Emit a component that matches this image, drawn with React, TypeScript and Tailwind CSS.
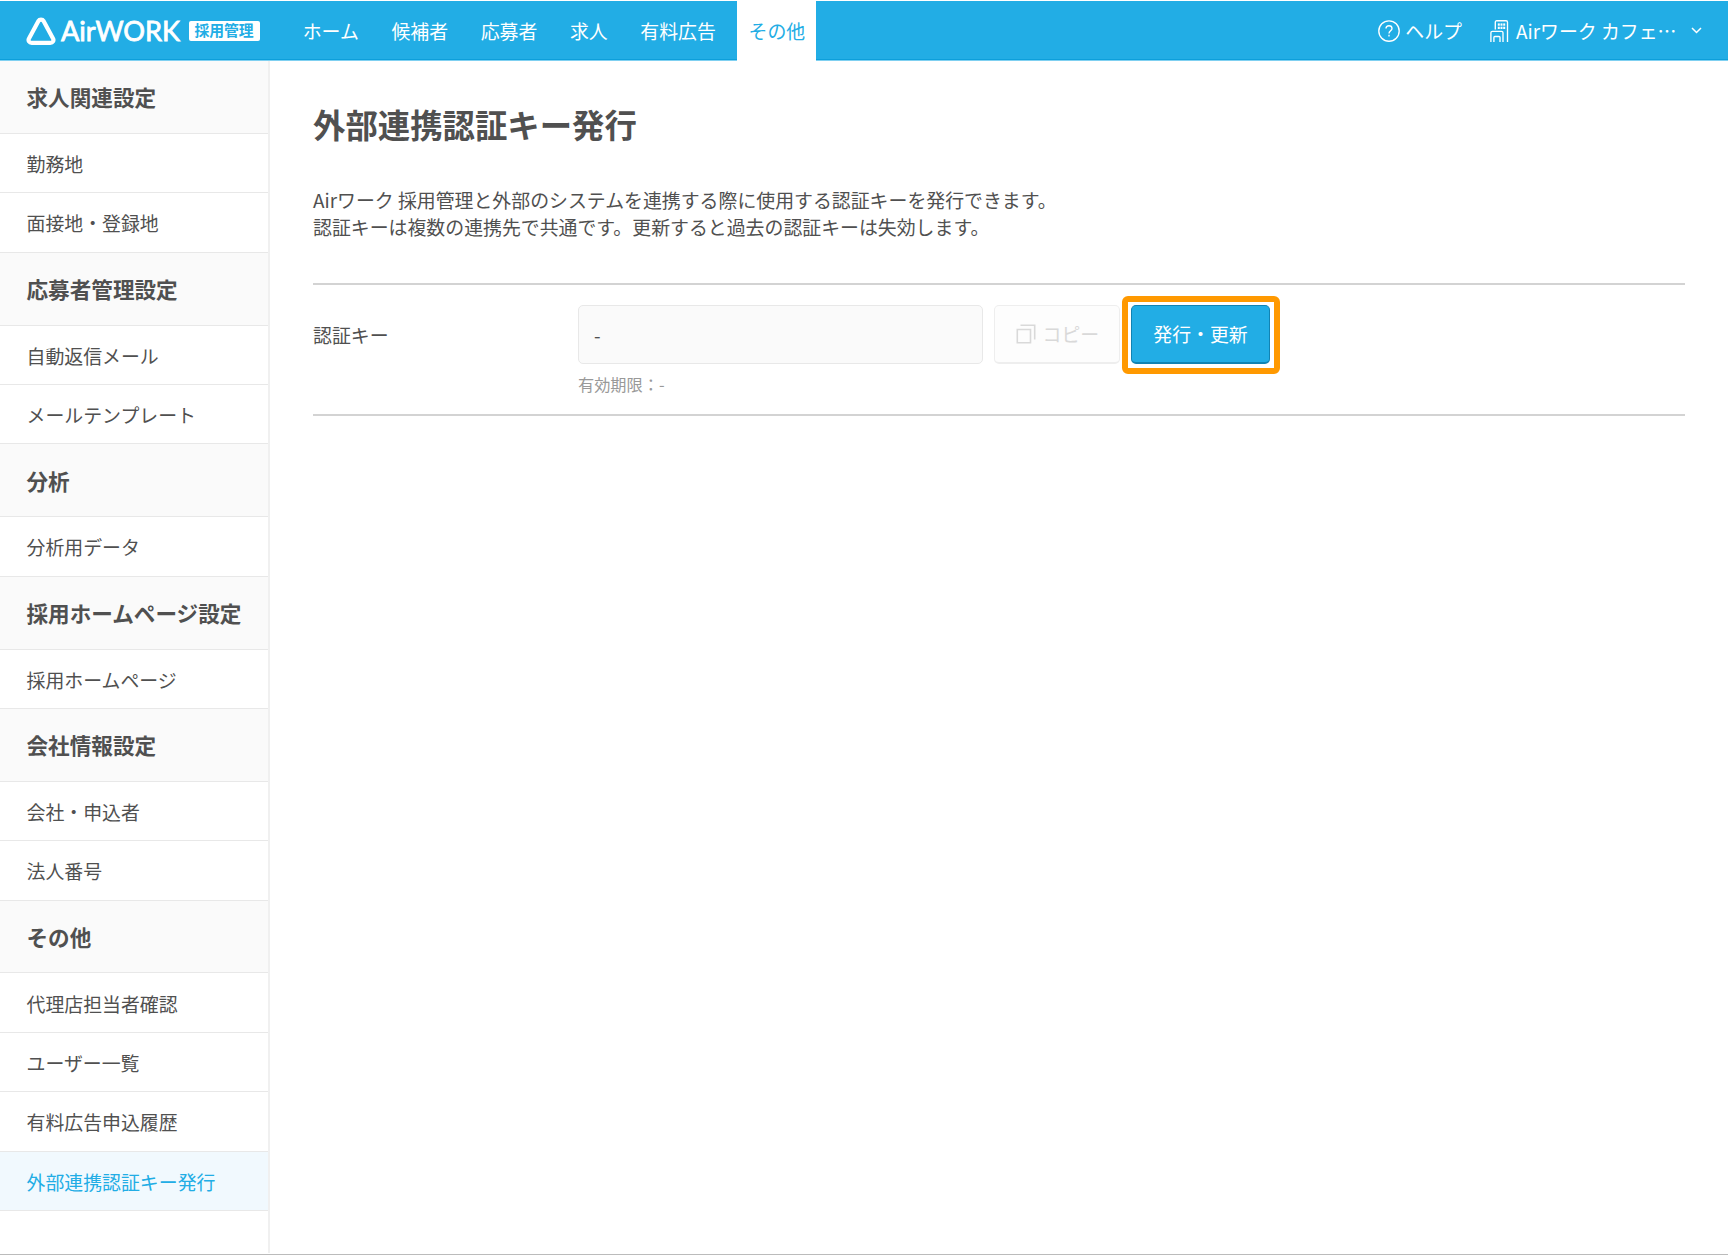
import type { ReactNode } from 'react';

const navItems = ['ホーム', '候補者', '応募者', '求人', '有料広告', 'その他'];

const sections = [
  { title: '求人関連設定', items: ['勤務地', '面接地・登録地'] },
  { title: '応募者管理設定', items: ['自動返信メール', 'メールテンプレート'] },
  { title: '分析', items: ['分析用データ'] },
  { title: '採用ホームページ設定', items: ['採用ホームページ'] },
  { title: '会社情報設定', items: ['会社・申込者', '法人番号'] },
  {
    title: 'その他',
    items: ['代理店担当者確認', 'ユーザー一覧', '有料広告申込履歴', '外部連携認証キー発行'],
  },
];

function Logo() {
  return (
    <div className="flex w-[265px] items-center pl-[26px]">
      <svg width="156" height="44" viewBox="0 -8 156 44" fill="none">
        <path
          d="M12.3 4.2a3.2 3.2 0 0 1 5.4 0l9.3 17.2c1.2 2.2-.2 4.5-2.7 4.5H5.7c-2.5 0-3.9-2.3-2.7-4.5z"
          stroke="white"
          strokeWidth="4.2"
          strokeLinejoin="round"
        />
        <text
          x="35"
          y="24.2"
          fill="white"
          stroke="white"
          strokeWidth="0.8"
          fontSize="27"
          fontFamily="Lato, sans-serif"
          textLength="119"
          lengthAdjust="spacingAndGlyphs"
        >
          AirWORK
        </text>
      </svg>
      <span className="ml-[6.5px] flex h-5 w-[71px] items-center justify-center rounded-[2px] bg-white pb-px text-[14.8px] leading-none font-bold text-[#22ade5]">
        採用管理
      </span>
    </div>
  );
}

function HelpIcon() {
  return (
    <svg width="22" height="22" viewBox="0 0 22 22" fill="none" stroke="white" strokeWidth="1.35">
      <circle cx="11" cy="11" r="10.2" />
      <path d="M8 8.6c0-1.8 1.3-2.9 3-2.9s3 1.1 3 2.7c0 2.2-3 2.4-3 5" />
      <path d="M11 14.8v1.6" />
    </svg>
  );
}

function BuildingIcon() {
  return (
    <svg width="19" height="22" viewBox="0 0 19 22" fill="none" stroke="white" strokeWidth="1.35">
      <path d="M5.3 9.5V2.2C5.3 1.3 5.9.7 6.8.7H16c.9 0 1.5.6 1.5 1.5V22" />
      <path d="M.9 22V12.8c0-.9.5-1.4 1.4-1.4h9.3c.9 0 1.4.5 1.4 1.4V22" />
      <path d="M3.9 22v-4.6c0-.6.3-.9.9-.9h4.3c.6 0 .9.3.9.9V22" />
      <g fill="white" stroke="none">
        <rect x="7.8" y="3.4" width="2" height="2.3" />
        <rect x="10.5" y="3.4" width="2" height="2.3" />
        <rect x="13.2" y="3.4" width="2" height="2.3" />
        <rect x="7.8" y="6.7" width="2" height="2.3" />
        <rect x="10.5" y="6.7" width="2" height="2.3" />
        <rect x="13.2" y="6.7" width="2" height="2.3" />
      </g>
    </svg>
  );
}

function Navbar() {
  return (
    <header className="mt-px flex h-[60px] shrink-0 border-b border-[#7fd0f1] bg-[#22ade5] text-white shadow-[inset_0_-1px_0_#0d9fdb]">
      <Logo />
      <nav className="flex gap-[10.8px] pl-[26.8px]">
        {navItems.map((item) => (
          <a
            key={item}
            className={
              item === 'その他'
                ? 'flex h-[60px] items-center bg-white px-[11px] pb-0.5 text-[#22ade5]'
                : 'flex h-[60px] items-center px-[10.9px] pb-0.5'
            }
          >
            {item}
          </a>
        ))}
      </nav>
      <div className="ml-auto flex items-center pr-[26px]">
        <HelpIcon />
        <span className="ml-[5px]">ヘルプ</span>
        <span className="ml-[28px] flex">
          <BuildingIcon />
        </span>
        <span className="ml-[7px] w-[161px] whitespace-nowrap">Airワーク カフェ…</span>
        <svg className="ml-[14px]" width="11" height="7" viewBox="0 0 11 7" fill="none" stroke="white" strokeWidth="1.5">
          <path d="M1 1l4.5 4.5L10 1" />
        </svg>
      </div>
    </header>
  );
}

function Sidebar() {
  return (
    <aside className="h-[1192px] w-[270px] shrink-0 border-r-2 border-[#f0f0f0]">
      {sections.map((section) => (
        <div key={section.title}>
          <h2 className="flex h-[72.9px] items-center border-b border-[#e8e8e8] bg-[#fafafa] pl-[26.5px] text-[21.6px] font-bold">
            {section.title}
          </h2>
          {section.items.map((item) => (
            <a
              key={item}
              className={
                item === '外部連携認証キー発行'
                  ? 'flex h-[59.4px] items-center border-b border-[#e8e8e8] bg-[#f1f9fe] pt-px pl-[26.5px] text-[#22ade5]'
                  : 'flex h-[59.4px] items-center border-b border-[#e8e8e8] pt-px pl-[26.5px]'
              }
            >
              {item}
            </a>
          ))}
        </div>
      ))}
    </aside>
  );
}

function Row({ label, children }: { label: string; children: ReactNode }) {
  return (
    <div className="mt-[43px] flex h-[133px] border-y-2 border-[#d3d3d3] pt-5">
      <div className="flex h-[59px] w-[265px] items-center">{label}</div>
      <div>{children}</div>
    </div>
  );
}

export default function App() {
  return (
    <div className="flex h-[1255px] flex-col overflow-hidden border-b border-[#bbb] bg-white font-['Noto_Sans_CJK_JP',sans-serif] text-[18.9px] leading-[27px] text-[#505050]">
      <Navbar />
      <div className="flex">
        <Sidebar />
        <main className="flex-1 pt-[39px] pr-[43px] pl-[43px]">
          <h1 className="text-[32.4px] leading-[48px] font-bold">外部連携認証キー発行</h1>
          <p className="mt-[38px]">
            Airワーク 採用管理と外部のシステムを連携する際に使用する認証キーを発行できます。
            <br />
            認証キーは複数の連携先で共通です。更新すると過去の認証キーは失効します。
          </p>
          <Row label="認証キー">
            <div className="flex">
              <div className="flex h-[59px] w-[405px] items-center rounded-[5px] border border-[#e8e8e8] bg-[#fafafa] pl-[15px]">
                -
              </div>
              <button className="ml-[11px] flex h-[59px] w-[126px] items-center rounded-[5px] border border-b-2 border-[#eee] bg-[#fdfdfd] pl-[21px] text-[#d9d9d9]">
                <svg width="20" height="20" viewBox="0 0 20 20" fill="none" stroke="currentColor" strokeWidth="1.6">
                  <path d="M1.3 5.5h13.2v13.2H1.3z" />
                  <path d="M4.5 1.3h14.2v14.2" />
                </svg>
                <span className="ml-[6.5px] pb-0.5">コピー</span>
              </button>
              <div className="relative ml-[11px]">
                <button className="h-[59px] w-[139px] rounded-[5px] border border-b-2 border-[#1183b3] bg-[#22ade5] pb-0.5 text-white">
                  発行・更新
                </button>
                <div className="absolute -top-[9px] -left-[9px] h-[78px] w-[158px] rounded-[6px] border-6 border-[#ff9900]" />
              </div>
            </div>
            <div className="mt-2 text-[16.2px] leading-6 text-[#999]">有効期限：-</div>
          </Row>
        </main>
      </div>
    </div>
  );
}
